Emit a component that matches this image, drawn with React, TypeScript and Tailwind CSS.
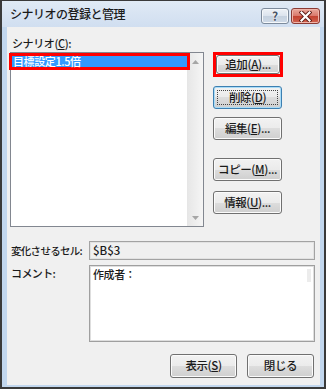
import React from "react";

const btnBase =
  "flex items-center justify-center rounded-[3px] border text-[11.5px] leading-none text-[#1b1b1b] bg-[linear-gradient(to_bottom,#f2f2f2_0%,#ebebeb_50%,#dddddd_50%,#cfcfcf_100%)]";

function Btn({
  children,
  className = "",
  focus = false,
}: {
  children: React.ReactNode;
  className?: string;
  focus?: boolean;
}) {
  return (
    <div
      className={
        btnBase +
        " " +
        (focus
          ? "border-[#3c7fb1] shadow-[inset_0_0_0_1px_#a9dcf8]"
          : "border-[#707070] shadow-[inset_0_0_0_1px_#fbfbfb]") +
        " " +
        className
      }
    >
      {focus ? (
        <div className="flex flex-1 self-stretch m-[3px] items-center justify-center border border-dotted border-[#444]">
          {children}
        </div>
      ) : (
        children
      )}
    </div>
  );
}

function U({ children }: { children: React.ReactNode }) {
  return <span className="underline underline-offset-[1px]">{children}</span>;
}

export default function App() {
  return (
    <div className="w-[326px] h-[389px] flex flex-col border-x-2 border-b-2 border-t border-[#3a3a3a] bg-[#c2d7ee] font-['Noto_Sans_CJK_JP','Noto_Sans',sans-serif] font-medium text-[#1b1b1b] tracking-[-0.4px]">
      {/* Title bar */}
      <div className="h-[26px] flex items-start bg-[linear-gradient(to_bottom,#e0eaf5,#d0def0)]">
        <div className="pl-[8px] pt-[5px] text-[12px] leading-[15px] tracking-[-0.5px] text-[#1a1a1a]">
          シナリオの登録と管理
        </div>
        <div className="ml-auto mr-[4px] mt-[7px] flex gap-[2px]">
          <div className="w-[28px] h-[16px] rounded-[3px] border border-[#7d8b9c] bg-[linear-gradient(to_bottom,#eef2f7_0%,#dbe3ed_50%,#c5d1df_50%,#cfdae7_100%)] shadow-[inset_0_0_0_1px_#f5f8fb] flex items-center justify-center">
            <span className="text-[12px] leading-none font-bold text-[#4a5566] [text-shadow:0_0_1px_#ffffff,0_0_2px_#ffffff]">
              ?
            </span>
          </div>
          <div className="w-[29px] h-[16px] rounded-[3px] border border-[#8b3a33] bg-[linear-gradient(to_bottom,#e9a99d_0%,#d9776a_50%,#c2402f_50%,#d1624f_100%)] shadow-[inset_0_0_0_1px_#efb5aa] flex items-center justify-center">
            <svg width="13" height="11" viewBox="0 0 13 11">
              <path
                d="M2.5 1.5 L10.5 9.5 M10.5 1.5 L2.5 9.5"
                stroke="#5a1a14"
                strokeWidth="4"
                strokeLinecap="square"
              />
              <path
                d="M2.5 1.5 L10.5 9.5 M10.5 1.5 L2.5 9.5"
                stroke="#ffffff"
                strokeWidth="2.2"
                strokeLinecap="square"
              />
            </svg>
          </div>
        </div>
      </div>

      {/* Frame + client */}
      <div className="flex-1 flex pl-[5px] pr-[4px] pb-[2px]">
        <div className="flex-1 flex flex-col bg-[#f0f0f0] pl-[3px] pr-[5px] text-[11px]">
          {/* label */}
          <div className="mt-[9px] h-[14px] leading-[14px] pl-[2px]">
            シナリオ(<U>C</U>):
          </div>

          {/* list + buttons */}
          <div className="mt-[2px] flex">
            <div className="relative w-[194px] h-[175px] border border-[#828790] bg-white flex">
              <div className="flex-1" />
              <div className="w-[16px] flex flex-col justify-between border-l border-[#e6e6e6] bg-[linear-gradient(to_right,#e7e7e7,#f5f5f5)]">
                <div className="h-[17px] flex items-center justify-center">
                  <svg width="7" height="4" viewBox="0 0 7 4">
                    <polygon points="3.5,0 7,4 0,4" fill="#a6a6a6" />
                  </svg>
                </div>
                <div className="h-[17px] flex items-center justify-center">
                  <svg width="7" height="4" viewBox="0 0 7 4">
                    <polygon points="0,0 7,0 3.5,4" fill="#a6a6a6" />
                  </svg>
                </div>
              </div>
              <div className="absolute left-[-2px] top-[0px] w-[181px] h-[17px] border-[3px] border-[#ff0000] bg-[#3399ff] flex items-center">
                <span className="pl-[1px] text-white text-[11px] leading-none">
                  目標設定1.5倍
                </span>
              </div>
            </div>

            <div className="ml-[9px] flex flex-col w-[70px]">
              <div className="h-[25px] w-[70px] border-[3px] border-[#ff0000] flex">
                <Btn className="flex-1">
                  追加(<U>A</U>)...
                </Btn>
              </div>
              <Btn focus className="mt-[9px] h-[23px] w-[69px]">
                削除(<U>D</U>)
              </Btn>
              <Btn className="mt-[8px] h-[23px] w-[69px]">
                編集(<U>E</U>)...
              </Btn>
              <Btn className="mt-[18px] h-[23px] w-[69px]">
                コピー(<U>M</U>)...
              </Btn>
              <Btn className="mt-[10px] h-[23px] w-[69px]">
                情報(<U>U</U>)...
              </Btn>
            </div>
          </div>

          {/* changing cells */}
          <div className="mt-[14px] flex items-center">
            <div className="w-[79px] pl-[1px] text-[10.5px] tracking-[-0.7px] whitespace-nowrap">
              変化させるセル:
            </div>
            <div className="w-[226px] h-[19px] border border-[#a3a3a3] shadow-[inset_0_0_0_1px_#e2e2e2] bg-[#f0f0f0] flex items-center pl-[3px] text-[11.5px] tracking-normal">
              $B$3
            </div>
          </div>

          {/* comment */}
          <div className="mt-[5px] flex items-start">
            <div className="w-[79px] pl-[1px] mt-[1px] leading-[14px] tracking-[-0.6px]">コメント:</div>
            <div className="relative w-[226px] h-[77px] border border-[#9f9f9f] shadow-[inset_0_0_0_1px_#dedede] bg-white pl-[3px] pt-[1px] leading-[14px]">
              作成者：
              <div className="absolute right-[3px] top-[3px] w-[4px] h-[13px] bg-[#ececec]" />
            </div>
          </div>

          {/* bottom buttons */}
          <div className="mt-[12px] flex justify-end gap-[10px] mr-[1px]">
            <Btn className="w-[67px] h-[24px]">
              表示(<U>S</U>)
            </Btn>
            <Btn className="w-[67px] h-[24px]">閉じる</Btn>
          </div>
        </div>
      </div>
    </div>
  );
}
